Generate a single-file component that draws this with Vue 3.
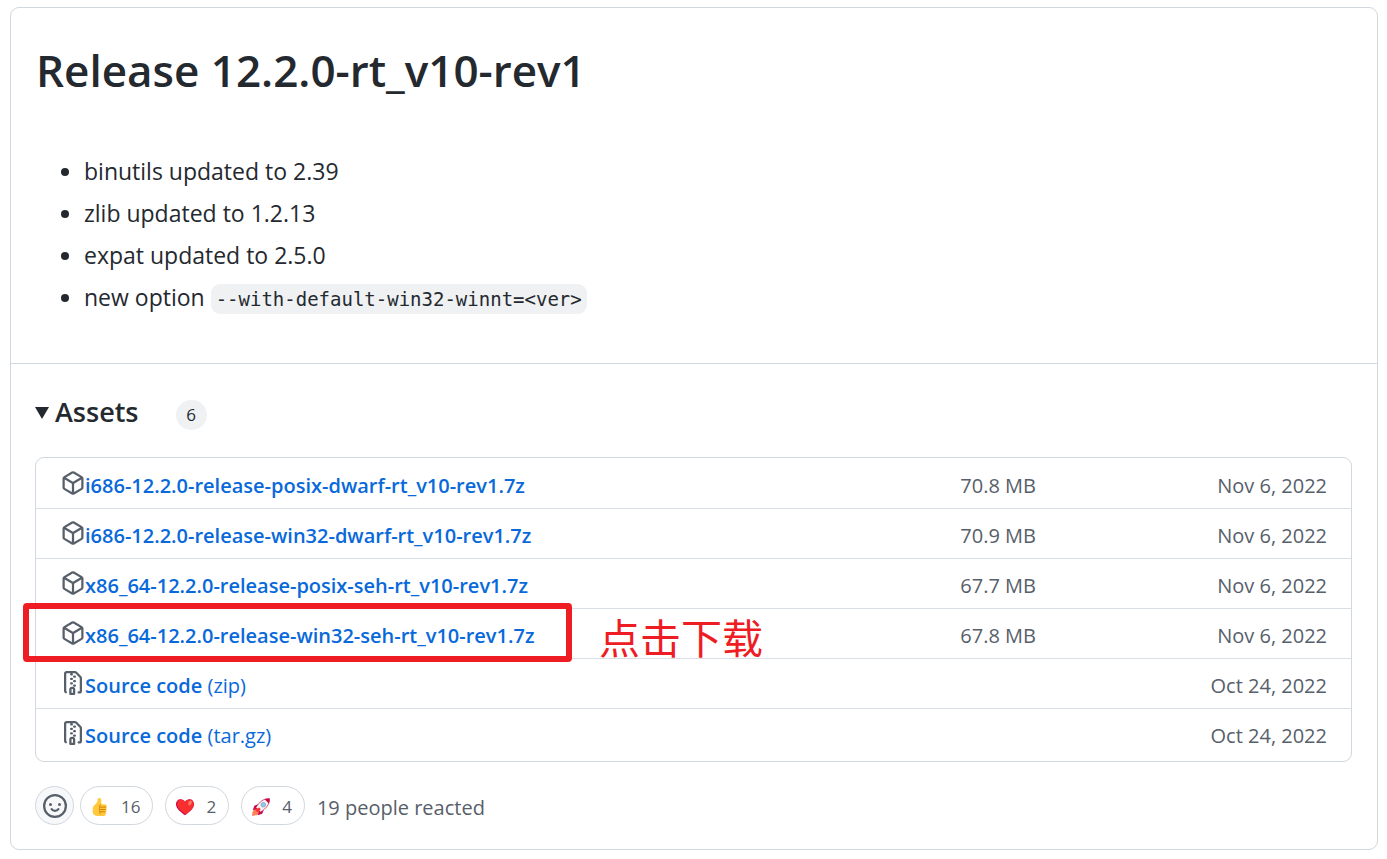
<script setup>
const notes = ['binutils updated to 2.39', 'zlib updated to 1.2.13', 'expat updated to 2.5.0']

const assets = [
  { name: 'i686-12.2.0-release-posix-dwarf-rt_v10-rev1.7z', size: '70.8 MB', date: 'Nov 6, 2022' },
  { name: 'i686-12.2.0-release-win32-dwarf-rt_v10-rev1.7z', size: '70.9 MB', date: 'Nov 6, 2022' },
  { name: 'x86_64-12.2.0-release-posix-seh-rt_v10-rev1.7z', size: '67.7 MB', date: 'Nov 6, 2022' },
  { name: 'x86_64-12.2.0-release-win32-seh-rt_v10-rev1.7z', size: '67.8 MB', date: 'Nov 6, 2022', marked: true },
  { name: 'Source code', format: '(zip)', date: 'Oct 24, 2022' },
  { name: 'Source code', format: '(tar.gz)', date: 'Oct 24, 2022' },
]

const packagePath =
  'M8.878.392a1.75 1.75 0 0 0-1.756 0l-5.25 3.045A1.75 1.75 0 0 0 1 4.951v6.098c0 .624.332 1.2.872 1.514l5.25 3.045a1.75 1.75 0 0 0 1.756 0l5.25-3.045c.54-.313.872-.89.872-1.514V4.951c0-.624-.332-1.2-.872-1.514L8.878.392ZM7.875 1.69a.25.25 0 0 1 .25 0l4.63 2.685L8 7.133 3.245 4.375l4.63-2.685ZM2.5 5.677v5.372c0 .09.047.171.125.216l4.625 2.683V8.432Zm6.25 8.271 4.625-2.683a.25.25 0 0 0 .125-.216V5.677L8.75 8.432Z'
const zipPath =
  'M3.5 1.75v11.5c0 .09.048.173.126.217a.75.75 0 0 1-.752 1.298A1.748 1.748 0 0 1 2 13.25V1.75C2 .784 2.784 0 3.75 0h5.586c.464 0 .909.185 1.237.513l2.914 2.914c.329.328.513.773.513 1.237v8.586A1.75 1.75 0 0 1 12.25 15h-.5a.75.75 0 0 1 0-1.5h.5a.25.25 0 0 0 .25-.25V4.664a.25.25 0 0 0-.073-.177L9.513 1.573a.25.25 0 0 0-.177-.073H7.25a.75.75 0 0 1 0 1.5h-.5a.75.75 0 0 1 0-1.5h-3a.25.25 0 0 0-.25.25Zm3.75 8.75h.5c.966 0 1.75.784 1.75 1.75v3a.75.75 0 0 1-.75.75h-2.5a.75.75 0 0 1-.75-.75v-3c0-.966.784-1.75 1.75-1.75ZM6 5.25a.75.75 0 0 1 .75-.75h.5a.75.75 0 0 1 0 1.5h-.5A.75.75 0 0 1 6 5.25Zm.75 2.25h.5a.75.75 0 0 1 0 1.5h-.5a.75.75 0 0 1 0-1.5ZM8 6.75A.75.75 0 0 1 8.75 6h.5a.75.75 0 0 1 0 1.5h-.5A.75.75 0 0 1 8 6.75ZM8.75 3h.5a.75.75 0 0 1 0 1.5h-.5a.75.75 0 0 1 0-1.5ZM8 9.75A.75.75 0 0 1 8.75 9h.5a.75.75 0 0 1 0 1.5h-.5A.75.75 0 0 1 8 9.75Zm-1 2.5v2.25h1v-2.25a.25.25 0 0 0-.25-.25h-.5a.25.25 0 0 0-.25.25Z'
</script>

<template>
  <main class="release">
    <section class="notes">
      <h1>Release 12.2.0-rt_v10-rev1</h1>
      <ul class="changes">
        <li v-for="note in notes" :key="note">{{ note }}</li>
        <li>new option <code>--with-default-win32-winnt=&lt;ver&gt;</code></li>
      </ul>
    </section>

    <section class="downloads">
      <details open>
        <summary>
          <svg class="caret" viewBox="0 0 14 12" aria-hidden="true"><path d="M0 0h14L7 12z" /></svg>
          <span class="heading">Assets</span>
          <span class="counter">6</span>
        </summary>
        <ul class="assets">
          <li v-for="asset in assets" :key="asset.name + asset.format">
            <div class="file">
              <svg class="icon" viewBox="0 0 16 16" aria-hidden="true">
                <path fill-rule="evenodd" :d="asset.format ? zipPath : packagePath" />
              </svg>
              <a href="#">{{ asset.name }}<template v-if="asset.format">&nbsp;<span class="format">{{ asset.format }}</span></template></a>
            </div>
            <span class="size">{{ asset.size }}</span>
            <span class="date">{{ asset.date }}</span>
            <template v-if="asset.marked">
              <span class="marker"></span>
              <span class="hint" lang="zh-CN">点击下载</span>
            </template>
          </li>
        </ul>
      </details>

      <div class="reactions">
        <button class="add" type="button" aria-label="Add reaction">
          <svg viewBox="0 0 16 16" aria-hidden="true">
            <circle cx="8" cy="8" r="7.25" />
            <path d="M5.75 10.1c.5.7 1.25 1.1 2.25 1.1s1.750-.4 2.250-1.100" />
            <g class="eyes"><circle cx="5" cy="7" r="1" /><circle cx="11" cy="7" r="1" /></g>
          </svg>
        </button>
        <button class="reaction" type="button" aria-label="16 thumbs up">
          <svg viewBox="0 0 18 18" aria-hidden="true">
            <path fill="#ffc83d" d="M6.600 1.600C6.600.6 7.300 0 8.300 0c1.200 0 2 .8 2 2v4.300h3.500c1.200 0 1.900.7 1.900 1.700 0 .5-.2.900-.5 1.200.4.300.6.800.6 1.300 0 .6-.3 1.100-.7 1.300.3.300.4.700.4 1.200 0 .6-.3 1-.8 1.300.2.300.3.600.2 1.100-.1 1.600-.9 2.500-2.400 2.500H6.300c-2.800 0-4.600-1.700-4.600-4.600V11c0-1.900.8-3.400 2.400-4.600C5.600 5.300 6.600 4 6.600 1.600z" />
            <path fill="none" stroke="#d67d00" stroke-width="1" stroke-linecap="round" d="M9.500 6.700c-1 .8-1.100 1.700-.7 2.400-.7 1-.6 1.800 0 2.500-.5.900-.4 1.700.2 2.300-.3.700-.1 1.400.4 1.900M9.500 9.100h5.300M9.500 11.500h4.800M9.700 13.800H14" />
          </svg>
          16
        </button>
        <button class="reaction" type="button" aria-label="2 hearts">
          <svg viewBox="0 0 18 18" aria-hidden="true">
            <path fill="#ca0b4a" d="M9 17.200C4 13.700 0 10.200 0 6.200 0 3.300 2 1.200 4.500 1.200 6.500 1.200 8.200 2.200 9 4c.8-1.800 2.500-2.800 4.500-2.800C16 1.200 18 3.300 18 6.200c0 4-4 7.500-9 11z" />
            <path fill="#f92f2f" d="M9.700 16.200C4.800 13 1.200 9.600 1.200 5.900c0-2.200 1.500-4.100 3.600-4.400C6.800 1.500 8.300 2.500 9 4.300c.8-1.800 2.500-2.800 4.500-2.800 2.500 0 4.200 2 4.200 4.500 0 4-3.700 7.200-8 10.200z" />
            <ellipse cx="14" cy="5" rx="1.600" ry="2.500" transform="rotate(28 14 5)" fill="#ff7968" />
          </svg>
          2
        </button>
        <button class="reaction" type="button" aria-label="4 rockets">
          <svg viewBox="0 0 18 18" aria-hidden="true">
            <path fill="#ff8257" d="M3.300 11.500 6.600 14.900c-.5 1.700-1.700 2.500-3 2.300L0 18l.5-3.700c.2-1.400 1.100-2.500 2.800-2.800z" />
            <path fill="#ca0b4a" d="M6 6.300 2.300 7.800.8 12.200l5-1zM11.700 12l-1.500 3.800-4.400 1.500 1-5z" />
            <path fill="#f4f4f4" stroke="#ca0b4a" stroke-width=".7" d="M17.300.7c.4 5.500-2.800 9.600-8.700 13.400l-4.700-4.700C7.700 3.500 11.800.3 17.300.7z" />
            <path fill="#ca0b4a" d="M12.600 1.300c1.600-.7 3.200-.8 5-.8.100 1.700 0 3.400-.8 5z" />
            <circle cx="11.300" cy="6.800" r="2.300" fill="#83cbff" stroke="#9b9b9b" stroke-width=".7" />
            <path fill="#f8312f" d="m7 9.400 1.700 1.700-2.600 3.400-1.500-.9-1.200-1.700z" />
          </svg>
          4
        </button>
        <span class="summary-text">19 people reacted</span>
      </div>
    </section>
  </main>
</template>

<style>
body {
  background: #fff;
}
</style>

<style scoped>
.release {
  margin: 7px 9px 9px 10px;
  border: 1px solid #d0d7de;
  border-radius: 9px;
  color: #24292f;
  font-family: "Open Sans", "Noto Sans", sans-serif;
  font-size: 23px;
  line-height: 42px;
}
ul {
  margin: 0;
  padding: 0;
}
.notes {
  padding: 30px 25px 43px;
  border-bottom: 1px solid #d0d7de;
}
h1 {
  margin: 0 0 48px;
  font-size: 44px;
  font-weight: 600;
  line-height: 64px;
}
.changes {
  padding-left: 48px;
}
code {
  padding: 4px 5px;
  border-radius: 9px;
  background: #eff1f3;
  font-family: "DejaVu Sans Mono", monospace;
  font-size: 19px;
}
.downloads {
  padding: 24px 25px 24px 24px;
}
summary {
  display: flex;
  align-items: center;
  height: 48px;
  margin-bottom: 21px;
  list-style: none;
  cursor: pointer;
}
.caret {
  width: 14px;
  height: 12px;
  margin: 2px 6px 0 0;
  fill: #24292f;
}
.heading {
  font-size: 27px;
  font-weight: 600;
}
.counter {
  min-width: 31px;
  margin: 6px 0 0 37px;
  border-radius: 15px;
  background: #eff1f3;
  font-size: 17px;
  line-height: 30px;
  text-align: center;
}
.assets {
  padding: 1px 0 3px;
  border: 1px solid #d0d7de;
  border-radius: 9px;
  font-size: 20px;
  list-style: none;
}
.assets li {
  position: relative;
  display: grid;
  grid-template-columns: 1fr 200px 291px;
  align-items: center;
  height: 45px;
  padding: 4px 24px 0;
  border-bottom: 1px solid #d8dee4;
}
.assets li:last-child {
  border-bottom: 0;
}
.file {
  display: flex;
  align-items: center;
}
.icon {
  width: 24px;
  height: 24px;
  margin: 0 0 6px 1px;
  fill: #57606a;
}
a {
  color: #0969da;
  font-weight: 600;
  text-decoration: none;
}
.format {
  font-weight: 400;
}
.size,
.date {
  color: #57606a;
  text-align: right;
}
.marker {
  position: absolute;
  top: -6px;
  left: -13px;
  width: 537px;
  height: 47px;
  border: 6px solid #ee1c23;
  border-radius: 4px;
}
.hint {
  position: absolute;
  top: 0;
  left: 563px;
  color: #ee1c23;
  font-family: "Noto Sans CJK SC", sans-serif;
  font-size: 41px;
  line-height: 54px;
}
.reactions {
  display: flex;
  align-items: center;
  margin-top: 24px;
}
button {
  display: flex;
  align-items: center;
  height: 39px;
  border: 1px solid #d0d7de;
  border-radius: 20px;
  background: #fff;
  color: #57606a;
  font-family: inherit;
  font-size: 17px;
  cursor: pointer;
}
.add {
  justify-content: center;
  width: 39px;
  margin-right: 6px;
  padding: 0;
  background: #f6f8fa;
}
.add svg {
  width: 24px;
  height: 24px;
  fill: none;
  stroke: #57606a;
  stroke-width: 1.5;
  stroke-linecap: round;
}
.add .eyes {
  fill: #57606a;
  stroke: none;
}
.reaction {
  gap: 12px;
  margin-right: 12px;
  padding: 2px 12px 0 10px;
}
.reaction svg {
  width: 18px;
  height: 18px;
}
.summary-text {
  padding-top: 5px;
  color: #57606a;
  font-size: 20px;
  line-height: 34px;
}
</style>
